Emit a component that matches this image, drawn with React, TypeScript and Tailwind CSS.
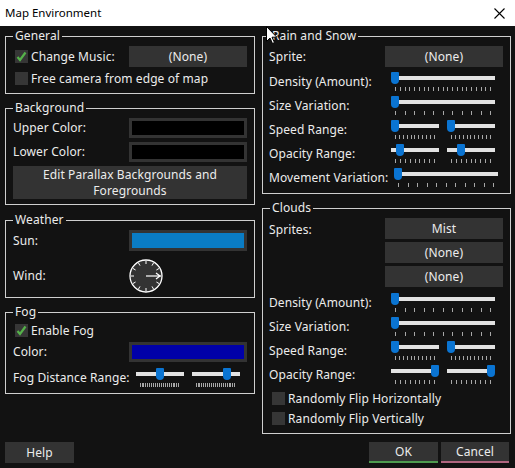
import React from 'react';

type SliderProps = { wide?: boolean; v: number; ticks: number; className?: string };

const Slider: React.FC<SliderProps> = ({ wide, v, ticks, className = '' }) => {
  const trackW = wide ? 104 : 48;
  return (
    <div className={`relative h-[20px] shrink-0 ${wide ? 'w-[104px]' : 'w-[48px]'} ${className}`}>
      <div className="mt-[4px] h-[4px] bg-[#e2e2e2]" />
      <div className="mx-[4px] mt-[7px] flex h-[4px] justify-between">
        {Array.from({ length: ticks }).map((_, i) => (
          <div key={i} className="h-[4px] w-px bg-[#a8a8a8]" />
        ))}
      </div>
      <div
        className="absolute top-0 h-[12px] w-[8px] rounded-t-[1px] rounded-b-[4px] bg-[#0a74d2]"
        style={{ left: Math.round(v * (trackW - 8)) }}
      />
    </div>
  );
};

const Check: React.FC<{ on?: boolean }> = ({ on }) => (
  <div className="ml-[2px] mr-[3px] flex h-[13px] w-[13px] shrink-0 items-center justify-center bg-[#363636]">
    {on && (
      <svg width="11" height="11" viewBox="0 0 11 11">
        <path d="M1.5 6 L4 9 L9.5 1.5" fill="none" stroke="#55b24a" strokeWidth="2.2" />
      </svg>
    )}
  </div>
);

const Group: React.FC<{ title: string; className: string; children: React.ReactNode }> = ({ title, className, children }) => (
  <div className={`relative border border-[#cfcfcf] ${className}`}>
    <span className="absolute left-[7px] top-[-9px] bg-[#121212] px-[2px] leading-[16px]">{title}</span>
    {children}
  </div>
);

const Btn: React.FC<{ children: React.ReactNode; className?: string }> = ({ children, className = '' }) => (
  <div className={`flex h-[21px] w-[118px] shrink-0 items-center justify-center bg-[#333333] ${className}`}>{children}</div>
);

const ColorBox: React.FC<{ color: string; className?: string }> = ({ color, className = '' }) => (
  <div className={`h-[20px] w-[118px] shrink-0 border-[3px] border-[#333333] ${color} ${className}`} />
);

const Row: React.FC<{ label: string; children: React.ReactNode; className?: string }> = ({ label, children, className = '' }) => (
  <div className={`flex items-center justify-between ${className}`}>
    <span className="whitespace-nowrap">{label}</span>
    {children}
  </div>
);

const Pair: React.FC<{ a: number; b: number; ticks: number }> = ({ a, b, ticks }) => (
  <div className="flex w-[118px] shrink-0">
    <Slider v={a} ticks={ticks} className="ml-[6px]" />
    <Slider v={b} ticks={ticks} className="ml-[8px]" />
  </div>
);

const Full: React.FC<{ v: number; ticks: number }> = ({ v, ticks }) => (
  <div className="flex w-[118px] shrink-0">
    <Slider wide v={v} ticks={ticks} className="ml-[6px]" />
  </div>
);

const Dial = () => (
  <svg width="34" height="34" viewBox="0 0 34 34">
    <circle cx="17" cy="17" r="16" fill="#333" stroke="#fff" strokeWidth="1.3" />
    {Array.from({ length: 12 }).map((_, i) => {
      const a = (i * Math.PI) / 6;
      return (
        <line
          key={i}
          x1={17 + Math.cos(a) * 12}
          y1={17 + Math.sin(a) * 12}
          x2={17 + Math.cos(a) * 15}
          y2={17 + Math.sin(a) * 15}
          stroke="#fff"
          strokeWidth="1"
        />
      );
    })}
    <line x1="17" y1="17" x2="31" y2="17" stroke="#fff" strokeWidth="1.2" />
    <path d="M27 14 L31 17 L27 20" fill="none" stroke="#fff" strokeWidth="1.2" />
  </svg>
);

export default function App() {
  return (
    <div className="relative flex h-[468px] w-[515px] flex-col overflow-hidden bg-[#121212] font-['Noto_Sans',sans-serif] text-[12px] tracking-[0.1px] text-[#ececec]">
      <div className="flex h-[26px] shrink-0 items-center justify-between bg-white pl-[5px] pr-[10px] text-[11.5px] tracking-normal text-black">
        <span>Map Environment</span>
        <svg width="11" height="11" viewBox="0 0 11 11">
          <path d="M0.5 0.5 L10.5 10.5 M10.5 0.5 L0.5 10.5" stroke="#000" strokeWidth="1.1" />
        </svg>
      </div>

      <div className="flex gap-[7px] px-[5px] pt-[10px]">
        <div className="flex w-[250px] flex-col">
          <Group title="General" className="h-[58px] px-[7px] pt-[9px]">
            <div className="flex h-[21px] items-center justify-between">
              <div className="flex items-center">
                <Check on />
                <span>Change Music:</span>
              </div>
              <Btn>(None)</Btn>
            </div>
            <div className="mt-[5px] flex h-[13px] items-center">
              <Check />
              <span>Free camera from edge of map</span>
            </div>
          </Group>

          <Group title="Background" className="mt-[14px] h-[97px] px-[7px] pt-[9px]">
            <Row label="Upper Color:">
              <ColorBox color="bg-black" />
            </Row>
            <Row label="Lower Color:" className="mt-[4px]">
              <ColorBox color="bg-black" />
            </Row>
            <div className="mt-[4px] flex h-[33px] flex-col items-center justify-center bg-[#333333] leading-[16px]">
              <span>Edit Parallax Backgrounds and</span>
              <span>Foregrounds</span>
            </div>
          </Group>

          <Group title="Weather" className="mt-[15px] h-[78px] px-[7px] pt-[9px]">
            <Row label="Sun:" className="h-[21px]">
              <ColorBox color="bg-[#0a7cc4]" className="h-[21px]" />
            </Row>
            <div className="mt-[8px] flex items-center">
              <span className="w-[116px]">Wind:</span>
              <Dial />
            </div>
          </Group>

          <Group title="Fog" className="mt-[14px] h-[82px] px-[7px] pt-[11px]">
            <div className="flex h-[13px] items-center">
              <Check on />
              <span>Enable Fog</span>
            </div>
            <Row label="Color:" className="mt-[5px]">
              <ColorBox color="bg-[#0000a8]" />
            </Row>
            <Row label="Fog Distance Range:" className="mt-[6px]">
              <Pair a={0.5} b={0.78} ticks={21} />
            </Row>
          </Group>
        </div>

        <div className="flex w-[249px] flex-col">
          <Group title="Rain and Snow" className="h-[158px] pl-[6px] pr-[7px] pt-[9px]">
            <Row label="Sprite:" className="h-[21px]">
              <Btn>(None)</Btn>
            </Row>
            <div className="mt-[5px] flex flex-col gap-[4px]">
              <Row label="Density (Amount):">
                <Full v={0} ticks={21} />
              </Row>
              <Row label="Size Variation:">
                <Full v={0} ticks={11} />
              </Row>
              <Row label="Speed Range:">
                <Pair a={0} b={0} ticks={11} />
              </Row>
              <Row label="Opacity Range:">
                <Pair a={0.125} b={0.25} ticks={9} />
              </Row>
              <Row label="Movement Variation:">
                <Full v={0} ticks={11} />
              </Row>
            </div>
          </Group>

          <Group title="Clouds" className="mt-[14px] h-[226px] pl-[6px] pr-[7px] pt-[9px]">
            <div className="flex justify-between">
              <span className="mt-[3px]">Sprites:</span>
              <div className="flex flex-col gap-[3px]">
                <Btn>Mist</Btn>
                <Btn>(None)</Btn>
                <Btn>(None)</Btn>
              </div>
            </div>
            <div className="mt-[6px] flex flex-col gap-[4px]">
              <Row label="Density (Amount):">
                <Full v={0} ticks={11} />
              </Row>
              <Row label="Size Variation:">
                <Full v={0} ticks={11} />
              </Row>
              <Row label="Speed Range:">
                <Pair a={0} b={0} ticks={11} />
              </Row>
              <Row label="Opacity Range:">
                <Pair a={1} b={1} ticks={9} />
              </Row>
            </div>
            <div className="mt-[7px] flex h-[13px] items-center pl-[1px]">
              <Check />
              <span>Randomly Flip Horizontally</span>
            </div>
            <div className="mt-[7px] flex h-[13px] items-center pl-[1px]">
              <Check />
              <span>Randomly Flip Vertically</span>
            </div>
          </Group>
        </div>
      </div>

      <div className="mt-auto mb-[5px] flex items-end px-[5px]">
        <div className="flex h-[21px] w-[69px] items-center justify-center bg-[#333333]">Help</div>
        <div className="ml-auto flex h-[21px] w-[69px] items-center justify-center border-b-2 border-[#4f9a4f] bg-[#333333]">OK</div>
        <div className="ml-[3px] mr-[1px] flex h-[21px] w-[68px] items-center justify-center border-b-2 border-[#b06680] bg-[#333333]">Cancel</div>
      </div>

      <svg className="absolute left-[266px] top-[26px]" width="12" height="19" viewBox="0 0 12 19">
        <path d="M0.5 0.5 L0.5 15.5 L4 12 L6.5 17.5 L8.5 16.5 L6 11.2 L10.8 11.2 Z" fill="#fff" stroke="#000" strokeWidth="1" />
      </svg>
    </div>
  );
}
